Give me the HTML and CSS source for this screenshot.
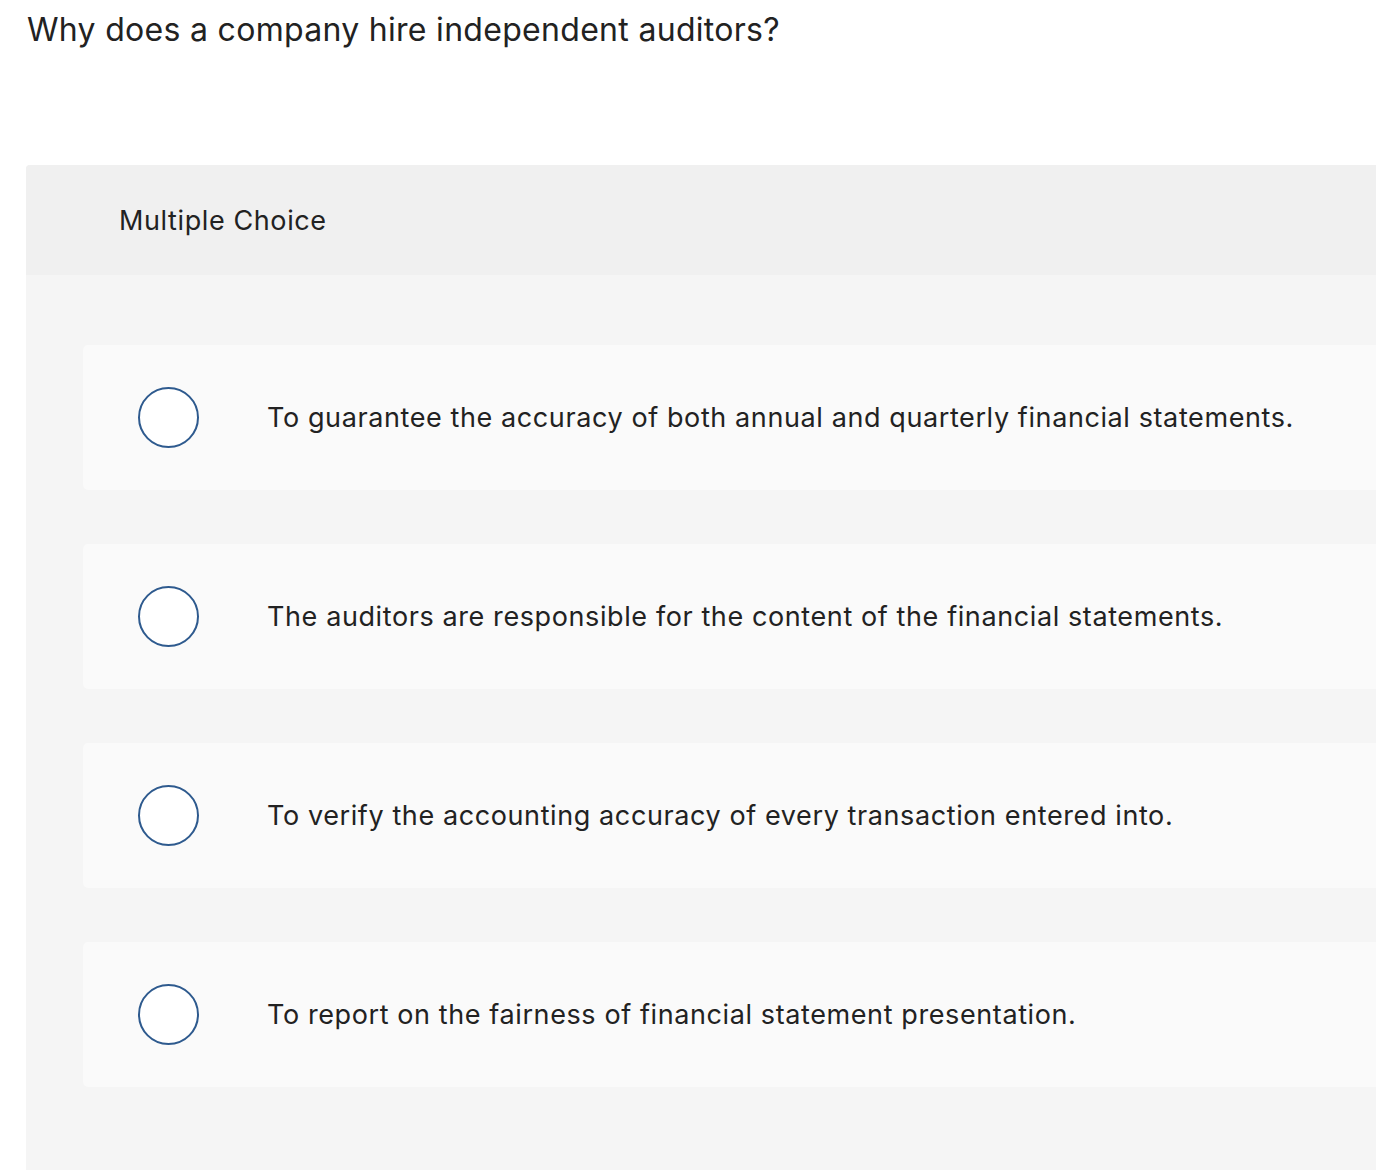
FILE: index.html
```html
<!DOCTYPE html>
<html>
<head>
<meta charset="utf-8">
<link rel="stylesheet" href="styles.css">
</head>
<body>
<h1 class="question">Why does a company hire independent auditors?</h1>
<section class="panel">
  <div class="panel-head">Multiple Choice</div>
  <div class="panel-body">
    <label class="option"><span class="radio"></span><span class="option-text">To guarantee the accuracy of both annual and quarterly financial statements.</span></label>
    <label class="option"><span class="radio"></span><span class="option-text">The auditors are responsible for the content of the financial statements.</span></label>
    <label class="option"><span class="radio"></span><span class="option-text">To verify the accounting accuracy of every transaction entered into.</span></label>
    <label class="option"><span class="radio"></span><span class="option-text">To report on the fairness of financial statement presentation.</span></label>
  </div>
</section>
</body>
</html>
```
FILE: styles.css
```css
html, body {
  margin: 0;
  padding: 0;
  overflow: hidden;
  background: #fff;
}
body {
  font-family: "Inter", "Liberation Sans", sans-serif;
  color: #222;
  width: 1376px;
  height: 1170px;
}
.question {
  margin: 0;
  padding: 10px 0 0 27px;
  font-size: 32px;
  font-weight: 400;
  letter-spacing: 0.3px;
  line-height: 40px;
  height: 155px;
  color: #222;
}
.panel {
  margin-left: 26px;
  width: 1400px;
  border-radius: 4px 0 0 0;
  overflow: hidden;
  background: #f5f5f5;
  height: 1005px;
}
.panel-head {
  background: #f0f0f0;
  height: 110px;
  display: flex;
  align-items: center;
  padding-left: 93px;
  font-size: 27px;
  letter-spacing: 0.6px;
  color: #222;
}
.panel-body {
  padding: 70px 0 0 57px;
  display: flex;
  flex-direction: column;
  gap: 54px;
}
.option {
  background: #fafafa;
  border-radius: 5px 0 0 5px;
  height: 145px;
  display: flex;
  align-items: center;
}
.radio {
  box-sizing: border-box;
  width: 61px;
  height: 61px;
  margin-left: 55px;
  border: 2px solid #2e5a8e;
  border-radius: 50%;
  background: #fff;
  flex: none;
}
.option-text {
  margin-left: 68px;
  font-size: 27px;
  letter-spacing: 0.6px;
  color: #222;
}
```
